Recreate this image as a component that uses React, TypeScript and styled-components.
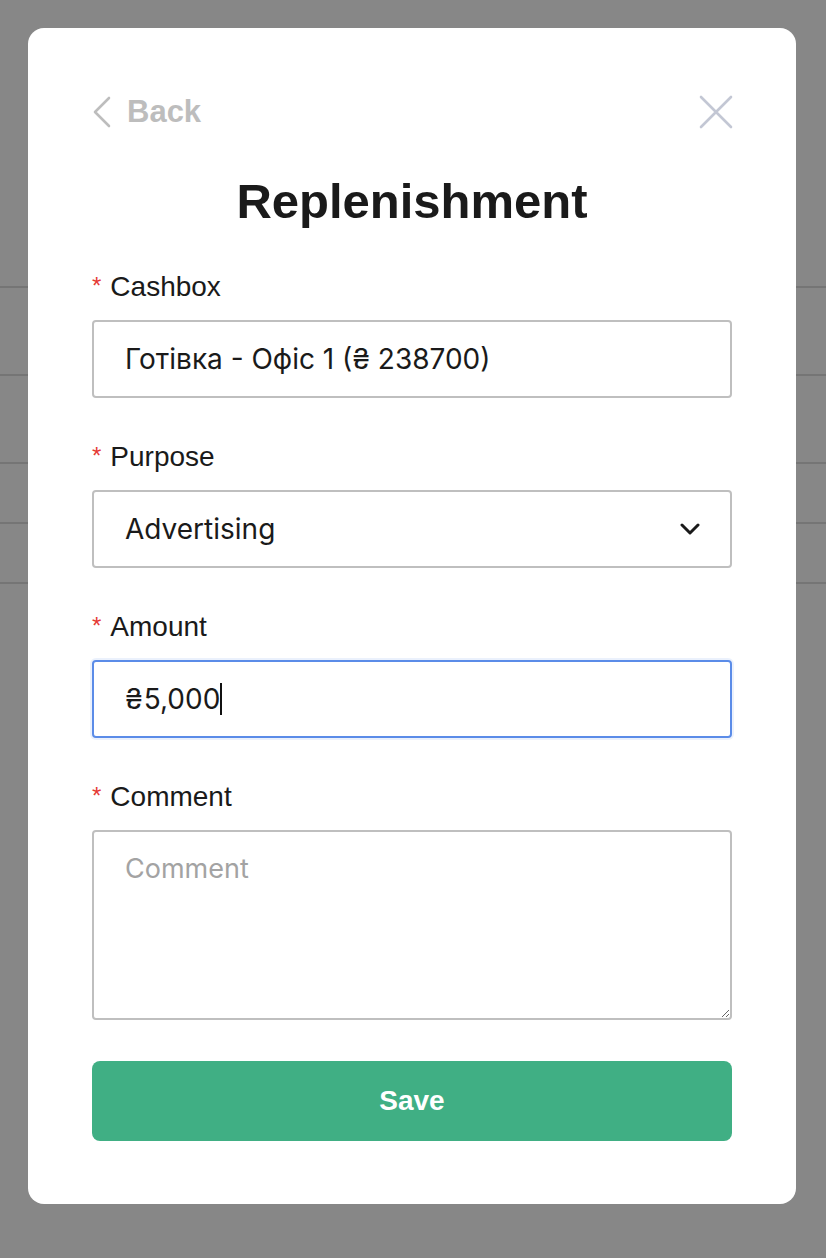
import React from 'react';
import styled, { createGlobalStyle } from 'styled-components';

const GlobalStyle = createGlobalStyle`
  html, body {
    margin: 0;
    padding: 0;
    background: #ffffff;
  }
  * {
    box-sizing: border-box;
  }
`;

const labelFont = `"Liberation Sans", Arial, Helvetica, sans-serif`;
const valueFont = `Inter, "Noto Sans", sans-serif`;

const Page = styled.div`
  width: 826px;
  height: 1258px;
  background: #ffffff;
  padding-top: 286px;
`;

const PageRow = styled.div<{ $height: number }>`
  height: ${(p) => p.$height}px;
  border-top: 2px solid #dedede;
`;

const Overlay = styled.div`
  position: fixed;
  inset: 0;
  background: rgba(0, 0, 0, 0.47);
  padding: 28px 30px 0 28px;
`;

const Modal = styled.div`
  width: 768px;
  background: #ffffff;
  border-radius: 16px;
  padding: 64px 64px 63px;
  display: flex;
  flex-direction: column;
`;

const TopBar = styled.div`
  height: 40px;
  display: flex;
  align-items: center;
  justify-content: space-between;
`;

const BackButton = styled.button`
  display: flex;
  align-items: center;
  gap: 15px;
  border: none;
  background: none;
  padding: 0;
  font-family: ${labelFont};
  font-size: 31px;
  font-weight: 700;
  color: #bdbdbd;
  cursor: pointer;
`;

const CloseButton = styled.button`
  border: none;
  background: none;
  padding: 0;
  width: 36px;
  height: 36px;
  margin-right: -2px;
  display: flex;
  align-items: center;
  justify-content: center;
  cursor: pointer;
`;

const Title = styled.h1`
  margin: 41px 0 40px;
  font-family: ${labelFont};
  font-size: 49px;
  line-height: 56px;
  font-weight: 700;
  color: #1a1a1a;
  text-align: center;
`;

const Field = styled.div`
  display: flex;
  flex-direction: column;
  margin-bottom: 41px;
`;

const Label = styled.label`
  display: block;
  height: 34px;
  padding-top: 1px;
  font-family: ${labelFont};
  font-size: 28px;
  line-height: 34px;
  color: #1a1a1a;
  margin-bottom: 17px;
`;

const Required = styled.span`
  color: #e53935;
  font-size: 24px;
  line-height: 1;
  margin-right: 9px;
  vertical-align: 2px;
`;

const boxBase = `
  width: 100%;
  height: 78px;
  border: 2px solid #bfbfbf;
  border-radius: 4px;
  background: #ffffff;
  padding: 0 31px;
  font-family: ${valueFont};
  font-size: 28px;
  color: #1a1a1a;
  outline: none;
`;

const TextInput = styled.input`
  ${boxBase}
`;

const SelectWrap = styled.div`
  position: relative;
`;

const Select = styled.select`
  ${boxBase}
  appearance: none;
  -webkit-appearance: none;
`;

const SelectArrow = styled.span`
  position: absolute;
  right: 32px;
  top: 50%;
  transform: translateY(-50%);
  display: flex;
  pointer-events: none;
`;

const FocusedBox = styled.div`
  ${boxBase}
  border-color: #5b8ce8;
  box-shadow: 0 0 0 2px rgba(91, 140, 232, 0.12);
  display: flex;
  align-items: center;
`;

const Currency = styled.span`
  margin-right: 1px;
`;

const Caret = styled.span`
  display: inline-block;
  width: 2px;
  height: 32px;
  background: #111111;
  margin-left: 0;
`;

const TextArea = styled.textarea`
  ${boxBase}
  height: 190px;
  padding: 21px 31px;
  resize: vertical;
  line-height: 32px;
  font-size: 27px;
  &::placeholder {
    color: #a3a3a3;
  }
`;

const SaveButton = styled.button`
  height: 80px;
  width: 100%;
  border: none;
  border-radius: 8px;
  background: #40af84;
  color: #ffffff;
  font-family: ${labelFont};
  font-size: 28px;
  font-weight: 700;
  cursor: pointer;
`;

const ChevronLeft = () => (
  <svg width="20" height="32" viewBox="0 0 20 32" fill="none">
    <path d="M17 2 L3 16 L17 30" stroke="#bdbdbd" strokeWidth="2.6" strokeLinecap="round" strokeLinejoin="round" />
  </svg>
);

const CloseIcon = () => (
  <svg width="34" height="34" viewBox="0 0 34 34" fill="none">
    <path d="M2 2 L32 32 M32 2 L2 32" stroke="#c3c7d4" strokeWidth="2.6" strokeLinecap="round" />
  </svg>
);

const ChevronDown = () => (
  <svg width="20" height="12" viewBox="0 0 20 12" fill="none">
    <path d="M2 2 L10 10 L18 2" stroke="#1a1a1a" strokeWidth="3" strokeLinecap="round" strokeLinejoin="round" />
  </svg>
);

const App = () => (
  <>
    <GlobalStyle />
    <Page>
      <PageRow $height={88} />
      <PageRow $height={88} />
      <PageRow $height={60} />
      <PageRow $height={60} />
      <PageRow $height={60} />
    </Page>
    <Overlay>
      <Modal>
        <TopBar>
          <BackButton type="button">
            <ChevronLeft />
            Back
          </BackButton>
          <CloseButton type="button" aria-label="Close">
            <CloseIcon />
          </CloseButton>
        </TopBar>

        <Title>Replenishment</Title>

        <Field>
          <Label>
            <Required>*</Required>Cashbox
          </Label>
          <TextInput readOnly value="Готівка - Офіс 1 (₴ 238700)" />
        </Field>

        <Field>
          <Label>
            <Required>*</Required>Purpose
          </Label>
          <SelectWrap>
            <Select defaultValue="advertising">
              <option value="advertising">Advertising</option>
              <option value="rent">Rent</option>
              <option value="salary">Salary</option>
            </Select>
            <SelectArrow>
              <ChevronDown />
            </SelectArrow>
          </SelectWrap>
        </Field>

        <Field>
          <Label>
            <Required>*</Required>Amount
          </Label>
          <FocusedBox>
            <Currency>₴</Currency>5,000
            <Caret />
          </FocusedBox>
        </Field>

        <Field>
          <Label>
            <Required>*</Required>Comment
          </Label>
          <TextArea placeholder="Comment" />
        </Field>

        <SaveButton type="button">Save</SaveButton>
      </Modal>
    </Overlay>
  </>
);

export default App;
